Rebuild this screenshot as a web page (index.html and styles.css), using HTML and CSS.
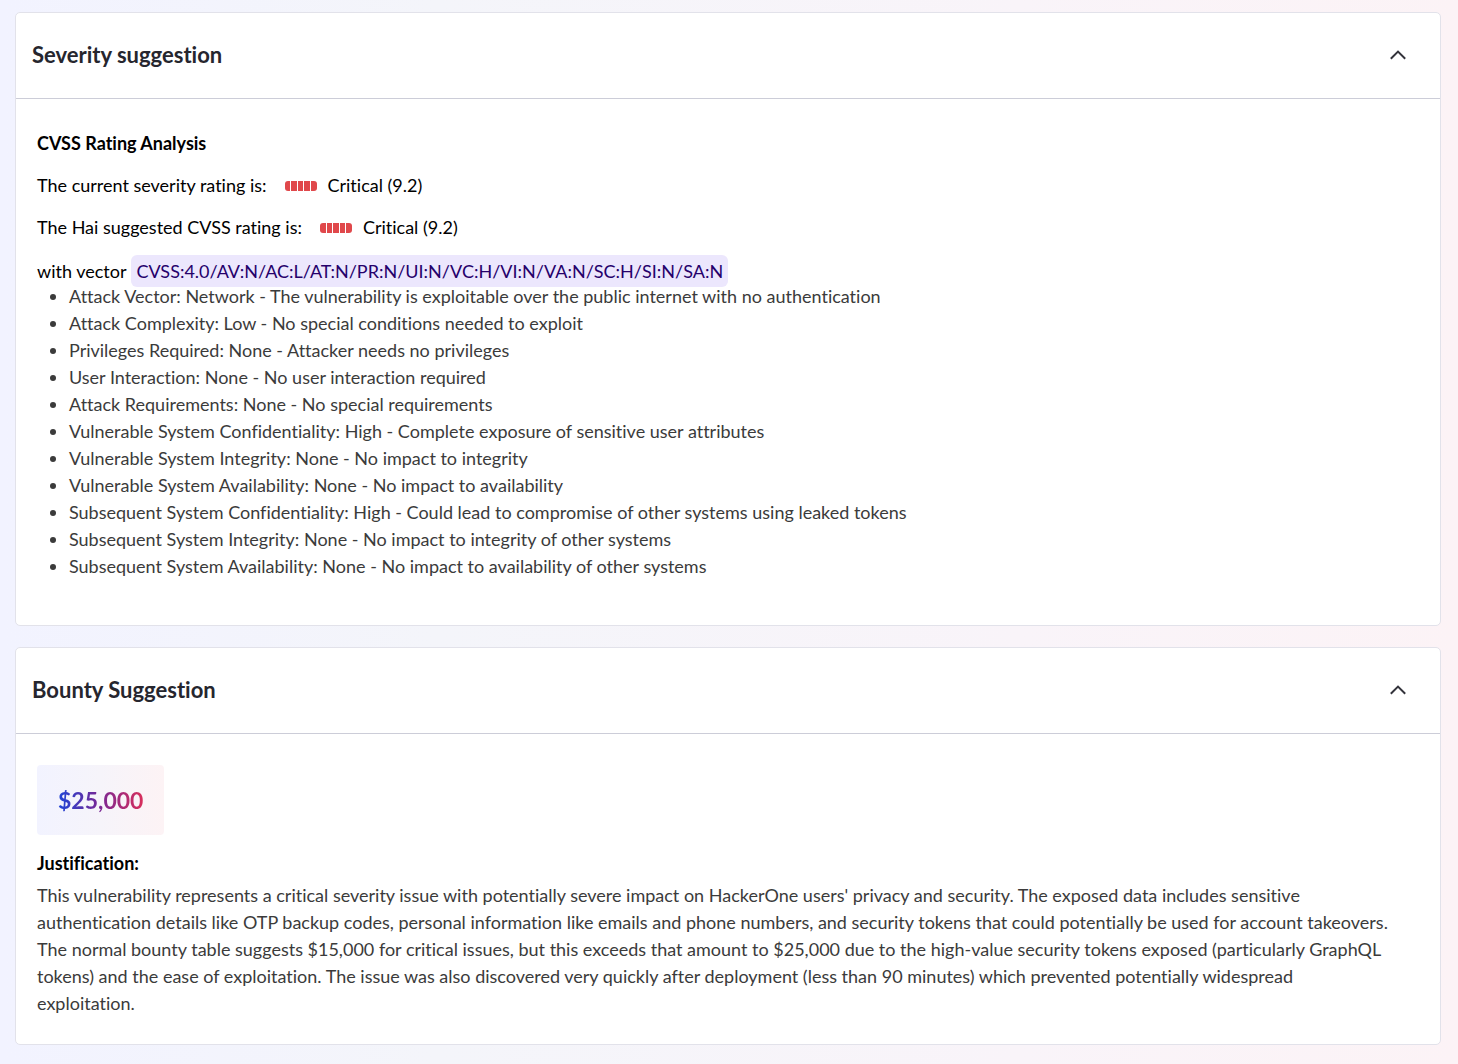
FILE: index.html
```html
<!DOCTYPE html>
<html lang="en">
<head>
    <meta charset="UTF-8">
    <meta name="viewport" content="width=device-width, initial-scale=1.0">
    <title>Report suggestions</title>
    <link rel="stylesheet" href="styles.css">
</head>
<body>
    <section class="card">
        <div class="card-header">
            <h2>Severity suggestion</h2>
            <button class="toggle" type="button" aria-label="Collapse severity suggestion" aria-expanded="true">
                <svg width="20" height="20" viewBox="0 0 20 20"><path d="M2.8 13.8 10 6.6l7.2 7.2"/></svg>
            </button>
        </div>
        <div class="card-body">
            <h3>CVSS Rating Analysis</h3>
            <div class="rating">
                <span>The current severity rating is:</span>
                <span class="severity"><i></i><i></i><i></i><i></i><i></i></span>
                <span>Critical (9.2)</span>
            </div>
            <div class="rating">
                <span>The Hai suggested CVSS rating is:</span>
                <span class="severity"><i></i><i></i><i></i><i></i><i></i></span>
                <span>Critical (9.2)</span>
            </div>
            <div class="vector">
                <span>with vector</span>
                <code>CVSS:4.0/AV:N/AC:L/AT:N/PR:N/UI:N/VC:H/VI:N/VA:N/SC:H/SI:N/SA:N</code>
            </div>
            <ul>
                <li>Attack Vector: Network - The vulnerability is exploitable over the public internet with no authentication</li>
                <li>Attack Complexity: Low - No special conditions needed to exploit</li>
                <li>Privileges Required: None - Attacker needs no privileges</li>
                <li>User Interaction: None - No user interaction required</li>
                <li>Attack Requirements: None - No special requirements</li>
                <li>Vulnerable System Confidentiality: High - Complete exposure of sensitive user attributes</li>
                <li>Vulnerable System Integrity: None - No impact to integrity</li>
                <li>Vulnerable System Availability: None - No impact to availability</li>
                <li>Subsequent System Confidentiality: High - Could lead to compromise of other systems using leaked tokens</li>
                <li>Subsequent System Integrity: None - No impact to integrity of other systems</li>
                <li>Subsequent System Availability: None - No impact to availability of other systems</li>
            </ul>
        </div>
    </section>

    <section class="card">
        <div class="card-header">
            <h2>Bounty Suggestion</h2>
            <button class="toggle" type="button" aria-label="Collapse bounty suggestion" aria-expanded="true">
                <svg width="20" height="20" viewBox="0 0 20 20"><path d="M2.8 13.8 10 6.6l7.2 7.2"/></svg>
            </button>
        </div>
        <div class="card-body">
            <div class="amount"><span>$25,000</span></div>
            <h3>Justification:</h3>
            <p>This vulnerability represents a critical severity issue with potentially severe impact on HackerOne users' privacy and security. The exposed data includes sensitive authentication details like OTP backup codes, personal information like emails and phone numbers, and security tokens that could potentially be used for account takeovers. The normal bounty table suggests $15,000 for critical issues, but this exceeds that amount to $25,000 due to the high-value security tokens exposed (particularly GraphQL tokens) and the ease of exploitation. The issue was also discovered very quickly after deployment (less than 90 minutes) which prevented potentially widespread exploitation.</p>
        </div>
    </section>
</body>
</html>
```
FILE: styles.css
```css
* {
    box-sizing: border-box;
}

body {
    font-family: Lato, sans-serif;
    font-size: 18px;
    line-height: 27px;
    font-variant-ligatures: none;
    color: #000;
    background: linear-gradient(90deg, #f2f3ff, #f4f5fa 30%, #f9f4f9 70%, #fcf3f6);
    min-height: 100vh;
    margin: 0;
    padding: 12px 17px 20px 15px;
}

h2, h3, p, ul {
    margin: 0;
}

.card {
    background: #fff;
    border: 1px solid #e2e2ea;
    border-radius: 5px;
    margin-bottom: 21px;
}

.card:last-child {
    margin-bottom: 0;
}

.card-header {
    display: flex;
    align-items: center;
    justify-content: space-between;
    height: 86px;
    padding: 0 32px 2px 16px;
    border-bottom: 1px solid #cccdd8;
}

h2 {
    font-size: 22px;
    font-weight: 700;
    color: #26262e;
}

.toggle {
    display: flex;
    padding: 0;
    border: none;
    background: none;
    cursor: pointer;
}

.toggle svg {
    fill: none;
    stroke: #33333b;
    stroke-width: 2;
}

.card-body {
    padding: 31px 21px 27px;
}

h3 {
    font-size: 18px;
    font-weight: 700;
}

.rating {
    display: flex;
    align-items: center;
    margin-top: 15px;
}

.severity {
    display: flex;
    gap: 1px;
    width: 32px;
    margin: 0 11px 0 18px;
    border-radius: 3px;
    overflow: hidden;
}

.severity i {
    flex: 1;
    height: 10px;
    background: #e0484b;
}

.vector {
    display: flex;
    align-items: center;
    gap: 5px;
    margin-top: 14px;
}

code {
    font-family: inherit;
    padding: 3px 5px 2px;
    border-radius: 6px;
    color: #25006b;
    background: #ece7fd;
}

ul {
    padding-left: 32px;
    margin-top: -4px;
    margin-bottom: 18px;
    color: #3b3b3b;
}

.amount {
    width: fit-content;
    padding: 20px 21px;
    margin-bottom: 15px;
    border-radius: 4px;
    font-size: 23px;
    line-height: 30px;
    font-weight: 700;
    background: linear-gradient(90deg, #f2f3ff, #f6f4fa 50%, #fdf3f5);
}

.amount span {
    background: linear-gradient(90deg, #1f45d6, #7a2693 50%, #d72f5c);
    background-clip: text;
    -webkit-background-clip: text;
    color: transparent;
}

p {
    margin-top: 5px;
    padding-right: 28px;
    color: #3b3b3b;
}
```
